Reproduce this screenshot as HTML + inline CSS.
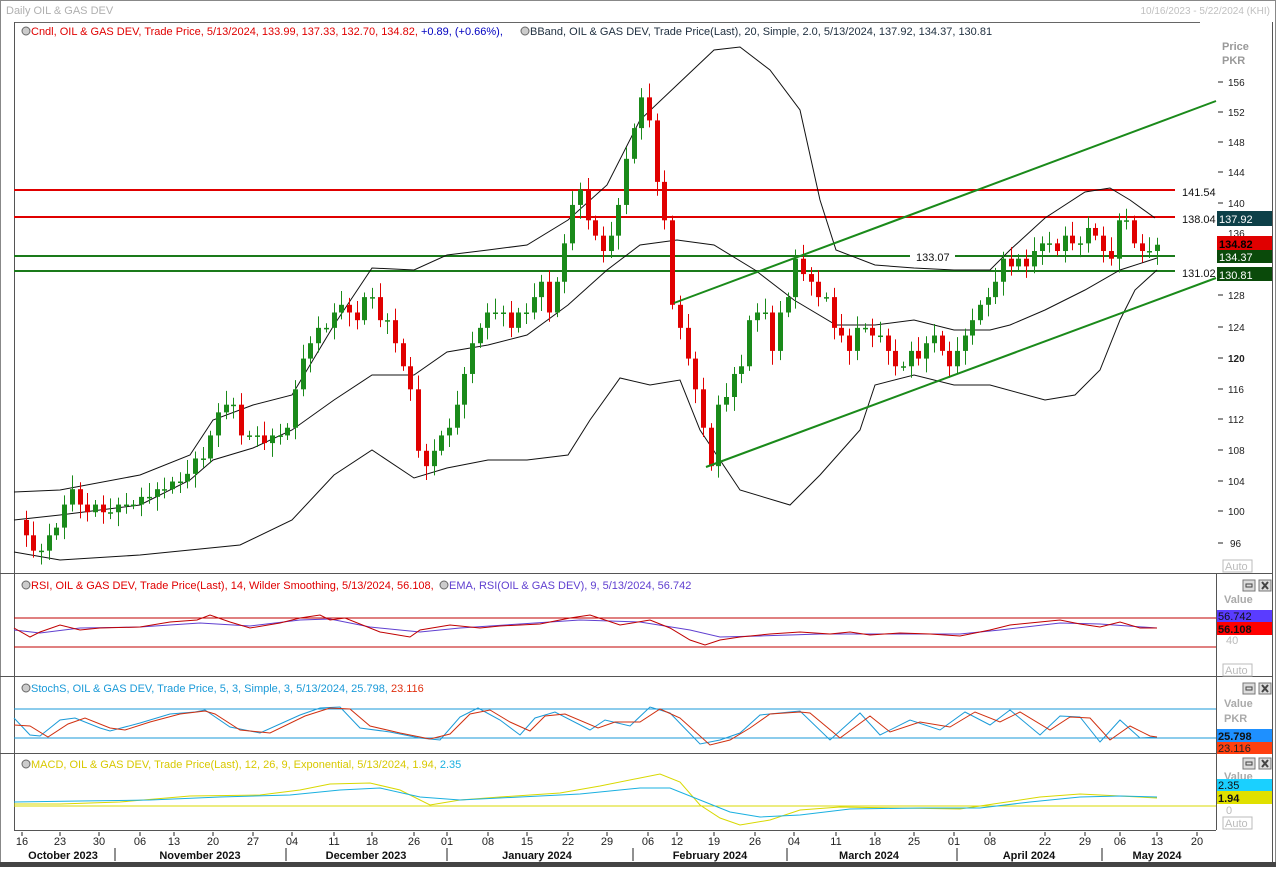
<!DOCTYPE html>
<html><head><meta charset="utf-8"><style>
body{margin:0;background:#fff;width:1276px;height:867px;overflow:hidden;font-family:Tahoma,"Liberation Sans",sans-serif}
svg text{font-family:"Liberation Sans",sans-serif}
</style></head><body>
<svg id="s" width="1276" height="867" xmlns="http://www.w3.org/2000/svg" font-size="11">
<rect x="0" y="0" width="1276" height="867" fill="#fff"/>
<rect x="0.5" y="0.5" width="1275" height="866" fill="none" stroke="#888"/>
<rect x="0" y="862" width="1276" height="5" fill="#444"/>
<text x="6" y="14" fill="#b0b0b0" font-size="11">Daily OIL &amp; GAS DEV</text>
<text x="1270" y="14" fill="#c0c0c0" font-size="10" text-anchor="end">10/16/2023 - 5/22/2024 (KHI)</text>
<line x1="14" y1="22.5" x2="1200" y2="22.5" stroke="#666"/>
<line x1="14.5" y1="22" x2="14.5" y2="830" stroke="#555"/>
<g stroke="#555"><line x1="0" y1="573.5" x2="1272" y2="573.5"/><line x1="0" y1="676.5" x2="1272" y2="676.5"/><line x1="0" y1="753.5" x2="1272" y2="753.5"/><line x1="14" y1="830.5" x2="1216" y2="830.5"/><line x1="1216.5" y1="573" x2="1216.5" y2="830"/><line x1="1272.5" y1="22" x2="1272.5" y2="862"/></g>
<circle cx="26" cy="31" r="4" fill="#ccc" stroke="#666"/><circle cx="525" cy="31" r="4" fill="#ccc" stroke="#666"/>
<text x="31" y="35" fill="#e00000" font-size="11">Cndl, OIL &amp; GAS DEV, Trade Price,  5/13/2024, 133.99, 137.33, 132.70, 134.82, <tspan fill="#0000c0">+0.89, (+0.66%),</tspan></text>
<text x="530" y="35" fill="#203040" font-size="11">BBand, OIL &amp; GAS DEV, Trade Price(Last),  20, Simple, 2.0, 5/13/2024, 137.92, 134.37, 130.81</text>
<!-- right axis -->
<g fill="#999" font-size="11" font-weight="bold"><text x="1222" y="50">Price</text><text x="1222" y="64">PKR</text></g>
<g fill="#222" font-size="10"><text x="1228" y="86">156</text><text x="1228" y="116">152</text><text x="1228" y="146">148</text><text x="1228" y="176">144</text><text x="1228" y="207">140</text><text x="1228" y="237">136</text><text x="1228" y="299">128</text><text x="1228" y="331">124</text><text x="1228" y="362" font-weight="bold">120</text><text x="1228" y="393">116</text><text x="1228" y="423">112</text><text x="1228" y="454">108</text><text x="1228" y="485">104</text><text x="1228" y="515">100</text><text x="1230" y="547">96</text></g>
<g stroke="#222"><line x1="1218" y1="82" x2="1223" y2="82"/><line x1="1218" y1="112" x2="1223" y2="112"/><line x1="1218" y1="142" x2="1223" y2="142"/><line x1="1218" y1="172" x2="1223" y2="172"/><line x1="1218" y1="203" x2="1223" y2="203"/><line x1="1218" y1="295" x2="1223" y2="295"/><line x1="1218" y1="327" x2="1223" y2="327"/><line x1="1218" y1="358" x2="1223" y2="358"/><line x1="1218" y1="389" x2="1223" y2="389"/><line x1="1218" y1="419" x2="1223" y2="419"/><line x1="1218" y1="450" x2="1223" y2="450"/><line x1="1218" y1="481" x2="1223" y2="481"/><line x1="1218" y1="511" x2="1223" y2="511"/><line x1="1218" y1="543" x2="1223" y2="543"/></g>
<!-- horizontal levels -->
<line x1="14" y1="190" x2="1175" y2="190" stroke="#e00000" stroke-width="2"/>
<line x1="14" y1="217" x2="1175" y2="217" stroke="#e00000" stroke-width="2"/>
<line x1="14" y1="256" x2="910" y2="256" stroke="#1a7a1a" stroke-width="2"/>
<line x1="955" y1="256" x2="1175" y2="256" stroke="#1a7a1a" stroke-width="2"/>
<line x1="14" y1="271" x2="1175" y2="271" stroke="#1a7a1a" stroke-width="2"/>
<g fill="#111" font-size="11"><text x="916" y="261">133.07</text><text x="1182" y="196">141.54</text><text x="1182" y="223">138.04</text><text x="1182" y="277">131.02</text></g>
<!-- bands -->
<g fill="none" stroke="#111" stroke-width="1">
<polyline points="14,492 60,490 140,475 190,455 213,420 253,405 292,395 334,325 372,268 414,270 447,255 488,250 527,245 568,220 607,185 640,120 677,85 714,50 740,47 770,70 800,110 820,200 836,250 875,265 914,268 954,270 990,270 1010,250 1045,218 1085,192 1110,188 1130,200 1155,218"/>
<polyline points="14,520 60,515 140,505 190,480 213,460 253,448 292,430 334,400 372,375 414,375 447,352 488,345 527,335 568,305 607,270 640,245 677,240 714,245 755,270 794,300 836,325 875,325 914,320 954,330 990,330 1010,325 1045,310 1085,290 1120,270 1157,258"/>
<polyline points="14,552 60,560 140,555 190,550 240,545 292,520 334,475 372,450 414,478 447,468 488,460 527,460 568,455 590,420 620,378 650,385 680,380 700,430 740,490 790,505 820,475 860,430 875,385 914,375 954,385 990,385 1045,400 1075,395 1100,370 1120,320 1135,290 1157,270"/>
</g>
<g id="candles"></g>
<line x1="674" y1="303" x2="1216" y2="101" stroke="#1a8a1a" stroke-width="2"/>
<line x1="706" y1="467" x2="1216" y2="278" stroke="#1a8a1a" stroke-width="2"/>
<!-- value boxes -->
<rect x="1217" y="211" width="55" height="15" fill="#0d4048"/><text x="1219" y="223" fill="#fff" font-size="11">137.92</text>
<rect x="1217" y="236" width="55" height="14" fill="#e00000"/><text x="1219" y="248" fill="#000" font-size="11" font-weight="bold">134.82</text>
<rect x="1217" y="250" width="55" height="13" fill="#0a4a0a"/><text x="1219" y="261" fill="#fff" font-size="11">134.37</text>
<rect x="1217" y="267" width="55" height="14" fill="#0a4a0a"/><text x="1219" y="279" fill="#fff" font-size="11">130.81</text>
<!-- RSI panel -->
<circle cx="26" cy="585" r="4" fill="#ccc" stroke="#666"/><circle cx="444" cy="585" r="4" fill="#ccc" stroke="#666"/>
<text x="31" y="589" fill="#e00000">RSI, OIL &amp; GAS DEV, Trade Price(Last),  14, Wilder Smoothing,  5/13/2024, 56.108,</text>
<text x="449" y="589" fill="#6040d0">EMA, RSI(OIL &amp; GAS DEV),  9,  5/13/2024, 56.742</text>
<line x1="14" y1="618" x2="1216" y2="618" stroke="#c00000"/><line x1="14" y1="647" x2="1216" y2="647" stroke="#c00000"/>
<polyline fill="none" stroke="#6040d0" points="14,630 40,633 80,628 140,627 200,623 250,626 300,620 330,619 370,627 420,632 460,628 520,624 580,620 640,622 690,630 720,637 760,636 820,634 900,634 960,634 1000,630 1060,623 1100,624 1157,628"/>
<polyline fill="none" stroke="#c00000" points="14,628 30,637 40,632 60,625 80,630 100,628 140,627 170,622 197,620 210,615 230,622 250,628 280,623 300,618 320,615 330,620 345,618 380,632 410,637 420,630 450,625 480,628 500,626 540,624 570,618 590,615 620,625 650,620 670,628 690,640 705,645 720,640 740,637 770,634 800,632 830,634 850,632 870,635 900,633 930,634 960,636 990,630 1010,625 1040,622 1060,620 1080,624 1100,627 1120,622 1140,628 1157,628"/>
<!-- Stoch panel -->
<circle cx="26" cy="688" r="4" fill="#ccc" stroke="#666"/>
<text x="31" y="692" fill="#1a9ad8">StochS, OIL &amp; GAS DEV, Trade Price,  5, 3, Simple, 3,  5/13/2024, 25.798, <tspan fill="#e03010">23.116</tspan></text>
<line x1="14" y1="709" x2="1216" y2="709" stroke="#1a9ad8"/><line x1="14" y1="738" x2="1216" y2="738" stroke="#1a9ad8"/>
<polyline fill="none" stroke="#1a9ad8" points="14,718 30,735 40,736 60,720 75,718 100,728 110,731 140,723 170,714 195,712 205,710 230,727 260,733 300,715 320,708 340,707 360,728 390,732 420,738 440,740 460,717 478,708 500,720 520,735 535,718 555,712 590,730 605,720 630,726 650,707 670,713 700,744 720,740 740,733 760,715 790,712 800,711 830,740 860,713 880,735 910,720 940,730 965,712 990,725 1010,710 1040,735 1060,716 1080,717 1100,742 1120,720 1140,738 1157,737"/>
<polyline fill="none" stroke="#d03010" points="14,725 30,726 48,737 68,724 85,718 110,728 125,730 150,722 180,714 205,711 215,714 240,730 270,733 305,716 330,708 350,709 370,726 400,733 430,739 450,734 470,714 490,710 510,722 530,731 545,716 565,714 598,728 615,722 640,722 660,709 680,718 710,745 730,740 750,728 770,714 800,712 810,713 840,738 870,716 890,732 920,722 950,727 975,712 1000,722 1020,712 1050,730 1070,717 1090,718 1110,740 1130,726 1150,736 1157,737"/>
<!-- MACD panel -->
<circle cx="26" cy="764" r="4" fill="#ccc" stroke="#666"/>
<text x="31" y="768" fill="#d8c800">MACD, OIL &amp; GAS DEV, Trade Price(Last),  12, 26, 9, Exponential,  5/13/2024, 1.94, <tspan fill="#1ab0e0">2.35</tspan></text>
<line x1="14" y1="806" x2="1216" y2="806" stroke="#d8d800"/>
<polyline fill="none" stroke="#d8d800" points="14,804 60,804 120,802 190,796 260,795 300,790 330,784 370,783 400,790 430,805 460,800 500,797 560,793 600,786 640,778 660,774 680,782 700,805 720,818 740,825 770,820 800,810 840,807 900,808 960,809 1000,803 1040,797 1080,794 1120,796 1157,798"/>
<polyline fill="none" stroke="#1ab0e0" points="14,802 80,801 150,800 220,797 290,795 340,790 380,788 420,797 460,800 520,797 580,794 640,788 670,788 700,800 730,812 760,817 800,815 850,809 920,808 980,808 1030,802 1080,797 1120,796 1157,797"/>
<!-- panel right controls -->
<g id="btns"></g>
<g fill="#aaa" font-size="11" font-weight="bold"><text x="1224" y="603">Value</text><text x="1224" y="707">Value</text><text x="1224" y="722">PKR</text><text x="1224" y="780">Value</text></g>
<g fill="#bbb" font-size="11"><text x="1226" y="644">40</text><text x="1226" y="814">0</text></g>
<g fill="#bbb" font-size="11" stroke="#bbb"><rect x="1223" y="664" width="29" height="12" fill="none"/><rect x="1223" y="817" width="29" height="12" fill="none"/><rect x="1223" y="560" width="29" height="12" fill="none"/></g>
<g fill="#bbb" font-size="11"><text x="1225" y="674">Auto</text><text x="1225" y="827">Auto</text><text x="1225" y="570">Auto</text></g>
<rect x="1217" y="610" width="55" height="12" fill="#5a3cff"/><text x="1218" y="620" fill="#111">56.742</text>
<rect x="1217" y="622" width="55" height="13" fill="#ff0000"/><text x="1218" y="633" fill="#111" font-weight="bold">56.108</text>
<rect x="1217" y="729" width="55" height="13" fill="#1e90ff"/><text x="1218" y="740" fill="#111" font-weight="bold">25.798</text>
<rect x="1217" y="742" width="55" height="12" fill="#ff4010"/><text x="1218" y="752" fill="#222">23.116</text>
<rect x="1217" y="779" width="55" height="12" fill="#1ad0ff"/><text x="1218" y="789" fill="#111">2.35</text>
<rect x="1217" y="791" width="55" height="13" fill="#e0e000"/><text x="1218" y="802" fill="#111" font-weight="bold">1.94</text>
<!-- time axis -->
<g id="ticks" stroke="#222"></g>
<g fill="#222" font-size="11" text-anchor="middle">
<text x="22" y="845">16</text><text x="60" y="845">23</text><text x="99" y="845">30</text><text x="140" y="845">06</text><text x="174" y="845">13</text><text x="213" y="845">20</text><text x="253" y="845">27</text><text x="292" y="845">04</text><text x="334" y="845">11</text><text x="372" y="845">18</text><text x="414" y="845">26</text><text x="447" y="845">01</text><text x="488" y="845">08</text><text x="527" y="845">15</text><text x="568" y="845">22</text><text x="607" y="845">29</text><text x="648" y="845">06</text><text x="677" y="845">12</text><text x="714" y="845">19</text><text x="755" y="845">26</text><text x="794" y="845">04</text><text x="836" y="845">11</text><text x="875" y="845">18</text><text x="914" y="845">25</text><text x="954" y="845">01</text><text x="990" y="845">08</text><text x="1045" y="845">22</text><text x="1085" y="845">29</text><text x="1120" y="845">06</text><text x="1157" y="845">13</text><text x="1197" y="845">20</text>
</g>
<g fill="#111" font-size="11" font-weight="bold" text-anchor="middle">
<text x="63" y="859">October 2023</text><text x="200" y="859">November 2023</text><text x="366" y="859">December 2023</text><text x="537" y="859">January 2024</text><text x="710" y="859">February 2024</text><text x="869" y="859">March 2024</text><text x="1029" y="859">April 2024</text><text x="1157" y="859">May 2024</text>
</g>
<g stroke="#222"><line x1="115" y1="848" x2="115" y2="861"/><line x1="286" y1="848" x2="286" y2="861"/><line x1="447" y1="848" x2="447" y2="861"/><line x1="633" y1="848" x2="633" y2="861"/><line x1="787" y1="848" x2="787" y2="861"/><line x1="957" y1="848" x2="957" y2="861"/><line x1="1102" y1="848" x2="1102" y2="861"/></g>
</svg>
<script>
var NS="http://www.w3.org/2000/svg",S=document.getElementById('s');
function el(g,t,a){var e=document.createElementNS(NS,t);for(var k in a)e.setAttribute(k,a[k]);g.appendChild(e);return e;}
var c=[99,97,95,95,97,98,101,103,101,100,101,100,100,101,101,101,102,102,103,103,104,104,105,107,107,110,113,114,114,110,110,110,109,110,110,111,116,120,122,124,124,126,127,126,125,128,128,125,125,122,119,116,108,106,108,110,111,114,118,122,124,126,126,126,124,126,126,128,130,126,130,135,140,142,138,136,134,136,140,146,150,154,151,143,138,127,124,120,116,111,106,114,115,118,119,125,126,126,121,126,128,133,131,130,128,128,124,123,121,124,124,123,123,121,119,119,121,120,122,123,121,119,121,123,125,127,128,130,133,132,133,132,134,135,135,134,136,135,135,137,136,134,133,138,138,135,134,134,133.99];
var n=c.length,x0=18,x1=1157,st=(x1-x0)/(n-1);
function Y(p){return 82+(156-p)*7.683;}
var g=document.getElementById('candles');
for(var i=1;i<n;i++){var o=c[i-1],cl=(i==n-1)?134.82:c[i];var hi=Math.max(o,cl)+0.6+((i*7)%5)*0.3,lo=Math.min(o,cl)-0.6-((i*3)%5)*0.3;
var col=cl>=o?'#1a8a1a':'#e00000';var x=Math.round(x0+i*st);
el(g,'line',{x1:x+.5,x2:x+.5,y1:Y(hi),y2:Y(lo),stroke:col});
var yt=Y(Math.max(o,cl)),yb=Y(Math.min(o,cl));el(g,'rect',{x:x-2,y:yt,width:5,height:Math.max(1.5,yb-yt),fill:col});}
var b=document.getElementById('btns');
[580,683,758].forEach(function(y){[1243,1259].forEach(function(x,j){el(b,'rect',{x:x,y:y,width:12,height:11,fill:'#ddd',stroke:'#777'});if(j==0)el(b,'rect',{x:x+3,y:y+4,width:6,height:3,fill:'none',stroke:'#444'});else{el(b,'line',{x1:x+3,y1:y+2,x2:x+9,y2:y+9,stroke:'#444','stroke-width':2});el(b,'line',{x1:x+9,y1:y+2,x2:x+3,y2:y+9,stroke:'#444','stroke-width':2});}});});
var t=document.getElementById('ticks');
[22,60,99,140,174,213,253,292,334,372,414,447,488,527,568,607,648,677,714,755,794,836,875,914,954,990,1045,1085,1120,1157,1197].forEach(function(x){el(t,'line',{x1:x,x2:x,y1:832,y2:836});});
</script>
</body></html>
